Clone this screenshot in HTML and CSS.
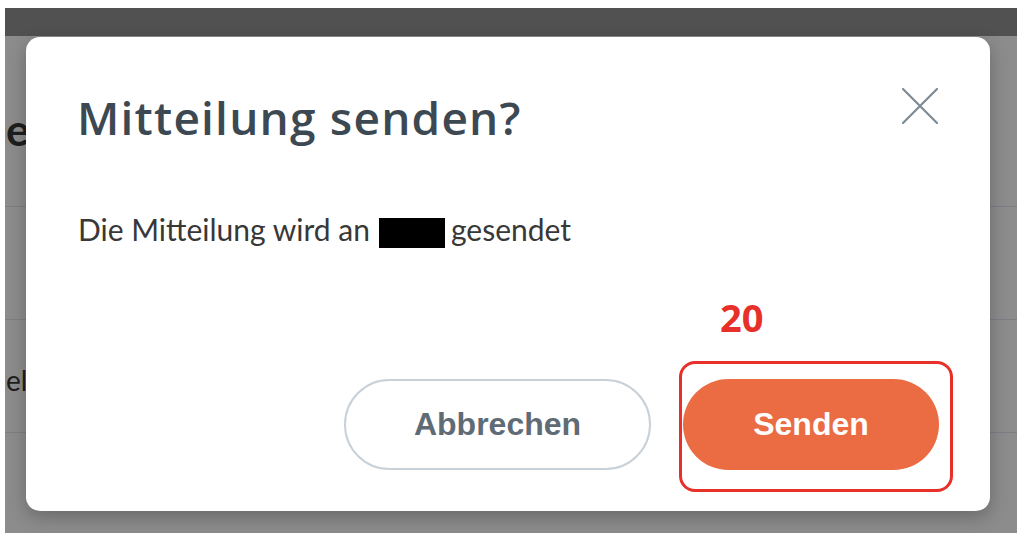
FILE: index.html
```html
<!DOCTYPE html>
<html lang="de">
<head>
<meta charset="utf-8">
<title>Mitteilung senden?</title>
<link rel="stylesheet" href="styles.css">
</head>
<body>
<div class="frame">
  <div class="topbar"></div>
  <div class="page">
    <div class="row row-head"><span class="peek peek-head">er</span></div>
    <div class="row row-a"></div>
    <div class="row row-b"><span class="peek peek-item">el</span></div>
    <div class="row row-c"></div>
  </div>

  <div class="modal">
    <div class="modal-head">
      <h1 class="title">Mitteilung senden?</h1>
      <button class="close" aria-label="Schließen">
        <svg width="36" height="36" viewBox="0 0 36 36"><path d="M1 1 L35 35 M35 1 L1 35" stroke="#7e8b95" stroke-width="2.2" fill="none" stroke-linecap="round"/></svg>
      </button>
    </div>
    <p class="msg">Die Mitteilung wird an <span class="redact"></span> gesendet</p>
    <div class="actions">
      <button class="btn btn-cancel">Abbrechen</button>
      <button class="btn btn-send">Senden</button>
    </div>
    <div class="annot-num">20</div>
    <div class="annot-box"></div>
  </div>
</div>
</body>
</html>
```

FILE: styles.css
```css
* { box-sizing: border-box; }
html, body { margin: 0; padding: 0; background: #fff; }
body { padding: 8px 0 0 5px; }

.frame {
  position: relative;
  width: 1012px;
  height: 525px;
  background: #8c8c8c;
  overflow: hidden;
}
.topbar { height: 28px; background: #515151; }

.page { display: flex; flex-direction: column; }
.row { border-bottom: 1px solid #7d7f86; display: flex; align-items: center; }
.row-head { height: 171px; }
.row-a { height: 113px; }
.row-b { height: 113px; }
.row-c { height: 113px; }
.peek {
  font-family: "Lato", "Liberation Sans", sans-serif;
  color: #1e1e1e;
  white-space: nowrap;
  padding-left: 1px;
}
.peek-head { font-size: 44px; font-weight: 700; margin-top: 16px; }
.peek-item { font-size: 28px; font-weight: 400; margin-top: 8px; }

.modal {
  position: absolute;
  left: 21px;
  top: 29px;
  width: 964px;
  height: 474px;
  background: #fff;
  border-radius: 14px;
  box-shadow: 0 6px 18px rgba(0,0,0,0.25);
  padding: 50px 51px 41px 52px;
  display: flex;
  flex-direction: column;
}
.modal-head { display: flex; justify-content: space-between; align-items: flex-start; }
.title {
  margin: 0 0 0 -1px;
  font-family: "Open Sans", "Liberation Sans", sans-serif;
  font-weight: 600;
  font-size: 46px;
  line-height: 60px;
  letter-spacing: 1.2px;
  color: #3c4852;
}
.close {
  border: 0; background: none; padding: 0;
  margin: 1px 1px 0 0;
  width: 36px; height: 36px;
  cursor: pointer;
}
.close svg { display: block; }

.msg {
  margin: 64px 0 0 0;
  font-family: "Lato", "Liberation Sans", sans-serif;
  font-size: 30px;
  line-height: 36px;
  color: #383838;
  display: flex;
  align-items: flex-start;
}
.redact {
  display: inline-block;
  width: 66px;
  height: 30px;
  background: #000;
  margin: 7px 6px 0 9px;
}

.actions {
  margin-top: auto;
  display: flex;
  justify-content: flex-end;
  gap: 32px;
}
.btn {
  height: 91px;
  border-radius: 46px;
  font-family: "Liberation Sans", Arial, sans-serif;
  font-weight: 700;
  font-size: 32px;
  cursor: pointer;
}
.btn-cancel {
  width: 307px;
  background: #fff;
  border: 2px solid #c9d1d8;
  color: #5f6b75;
}
.btn-send {
  width: 256px;
  background: #eb6b42;
  border: 0;
  color: #fff;
}

.annot-num {
  position: absolute;
  left: 694px;
  top: 258px;
  font-family: "Open Sans", "Liberation Sans", sans-serif;
  font-weight: 700;
  font-size: 38px;
  line-height: 44px;
  color: #e8302a;
}
.annot-box {
  position: absolute;
  left: 653px;
  top: 324px;
  width: 274px;
  height: 131px;
  border: 3px solid #e8302a;
  border-radius: 16px;
}
```
